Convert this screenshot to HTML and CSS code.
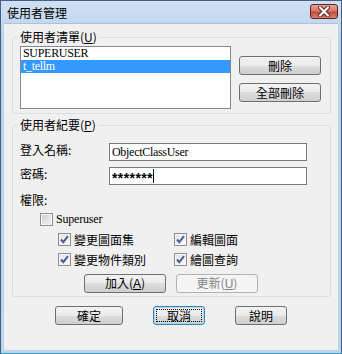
FILE: index.html
```html
<!DOCTYPE html>
<html lang="zh-Hant">
<head>
    <meta charset="UTF-8">
    <title>使用者管理</title>
    <link rel="stylesheet" href="styles.css">
</head>
<body>

<div class="window">
    <div class="titlebar">
        <span class="title">使用者管理</span>
        <span class="close-btn">
            <svg width="16" height="11" viewBox="0 0 16 11">
                <path d="M4 1.5 L12 9.5 M12 1.5 L4 9.5" stroke="#5a1f1f" stroke-width="4" stroke-linecap="round"/>
                <path d="M4 1.5 L12 9.5 M12 1.5 L4 9.5" stroke="#ffffff" stroke-width="2.2" stroke-linecap="round"/>
            </svg>
        </span>
    </div>

    <div class="client">
        <!-- user list -->
        <fieldset class="group">
            <legend>使用者清單(<u>U</u>)</legend>
            <div class="list-row">
                <div class="listbox">
                    <div class="list-item">SUPERUSER</div>
                    <div class="list-item selected">t_tellm</div>
                </div>
                <div class="side-buttons">
                    <button class="btn wide">刪除</button>
                    <button class="btn wide">全部刪除</button>
                </div>
            </div>
        </fieldset>

        <!-- user details -->
        <fieldset class="group group-detail">
            <legend>使用者紀要(<u>P</u>)</legend>

            <div class="field-row">
                <label class="field-label">登入名稱:</label>
                <div class="textbox">ObjectClassUser</div>
            </div>
            <div class="field-row second">
                <label class="field-label">密碼:</label>
                <div class="textbox password">*******<span class="caret"></span></div>
            </div>

            <div class="perm-label">權限:</div>

            <div class="check superuser">
                <span class="cb"></span>
                <span class="latin">Superuser</span>
            </div>

            <div class="check-grid">
                <div class="check">
                    <span class="cb checked"><svg width="11" height="11" viewBox="0 0 11 11"><path d="M2 5.5 L4.3 8.2 L9 2.2" fill="none" stroke="#4a5f97" stroke-width="2"/></svg></span>
                    <span>變更圖面集</span>
                </div>
                <div class="check">
                    <span class="cb checked"><svg width="11" height="11" viewBox="0 0 11 11"><path d="M2 5.5 L4.3 8.2 L9 2.2" fill="none" stroke="#4a5f97" stroke-width="2"/></svg></span>
                    <span>編輯圖面</span>
                </div>
                <div class="check">
                    <span class="cb checked"><svg width="11" height="11" viewBox="0 0 11 11"><path d="M2 5.5 L4.3 8.2 L9 2.2" fill="none" stroke="#4a5f97" stroke-width="2"/></svg></span>
                    <span>變更物件類別</span>
                </div>
                <div class="check">
                    <span class="cb checked"><svg width="11" height="11" viewBox="0 0 11 11"><path d="M2 5.5 L4.3 8.2 L9 2.2" fill="none" stroke="#4a5f97" stroke-width="2"/></svg></span>
                    <span>繪圖查詢</span>
                </div>
            </div>

            <div class="add-row">
                <button class="btn wide">加入(<u>A</u>)</button>
                <button class="btn wide" disabled>更新(<u>U</u>)</button>
            </div>
        </fieldset>

        <div class="dialog-buttons">
            <button class="btn ok">確定</button>
            <button class="btn small focused">取消</button>
            <button class="btn small">說明</button>
        </div>
    </div>
</div>

</body>
</html>
```

FILE: styles.css
```css
body {
    margin: 0;
    font-family: "Liberation Serif", "Noto Sans CJK TC", serif;
    font-size: 12px;
    color: #000;
    background-color: #fff;
}
.window {
    width: 342px;
    height: 354px;
    box-sizing: border-box;
    border: 1px solid #43607f;
    border-bottom-color: #2aa0cf;
    padding: 0 3px 3px 3px;
    background: linear-gradient(#cfe0f3, #b9d1ea 40px, #bcd4ec);
    display: flex;
    flex-direction: column;
}
.titlebar {
    height: 22px;
    display: flex;
    align-items: flex-start;
    justify-content: space-between;
    padding-left: 3px;
}
.title {
    font-family: "Noto Sans CJK TC", sans-serif;
    font-size: 12px;
    line-height: 14px;
    margin-top: 5px;
}
.close-btn {
    width: 28px;
    height: 15px;
    box-sizing: border-box;
    margin-top: 3px;
    border: 1px solid #5b2424;
    border-radius: 3px;
    background: linear-gradient(#e8a495, #d77766 45%, #c64a38 55%, #d8826f);
    display: flex;
    align-items: center;
    justify-content: center;
}
.client {
    flex: 1;
    background-color: #f0f0f0;
    padding-top: 6px;
    border-top: 1px solid #a9c3de;
}
.group {
    margin: 0 7px 0 8px;
    border: 1px solid #d5dfe5;
    border-radius: 3px;
    padding: 2px 9px 4px 7px;
    min-width: 0;
}
.group legend {
    font-family: "Noto Sans CJK TC", sans-serif;
    line-height: 14px;
    padding: 0 2px;
    margin-left: -2px;
}
.group-detail {
    margin-top: 4px;
    padding-top: 11px;
    padding-bottom: 3px;
}
.list-row {
    display: flex;
    gap: 8px;
}
.listbox {
    width: 211px;
    height: 63px;
    box-sizing: border-box;
    border: 1px solid #828790;
    background-color: #fff;
}
.list-item {
    height: 13px;
    line-height: 13px;
    padding-left: 2px;
    letter-spacing: -0.3px;
}
.list-item.selected {
    background-color: #3399ff;
    color: #fff;
}
.side-buttons {
    display: flex;
    flex-direction: column;
    gap: 8px;
    padding-top: 10px;
}
.btn {
    height: 19px;
    box-sizing: border-box;
    padding: 0;
    border: 1px solid #707070;
    border-radius: 3px;
    background: linear-gradient(#f2f2f2, #ebebeb 50%, #dddddd 50%, #cfcfcf);
    font-family: "Noto Sans CJK TC", sans-serif;
    font-size: 12px;
    line-height: 16px;
    color: #000;
}
.btn u {
    font-family: "Liberation Sans", sans-serif;
}
.btn:disabled {
    border-color: #adb2b5;
    background: #f4f4f4;
    color: #838383;
}
.btn.wide {
    width: 82px;
}
.btn.ok {
    width: 68px;
}
.btn.small {
    width: 52px;
}
.btn.focused {
    border-color: #3c7fb1;
    box-shadow: inset 0 0 0 1px #a8dcf6;
    outline: 1px dotted #000;
    outline-offset: -4px;
}
.field-row {
    display: flex;
    align-items: flex-start;
}
.field-row.second {
    margin-top: 6px;
}
.field-label {
    width: 89px;
    font-family: "Noto Sans CJK TC", sans-serif;
    line-height: 13px;
}
.textbox {
    width: 198px;
    height: 18px;
    box-sizing: border-box;
    border: 1px solid #7a7a7a;
    background-color: #fff;
    padding-left: 2px;
    line-height: 16px;
    letter-spacing: -0.3px;
    display: flex;
    align-items: center;
}
.textbox.password {
    font-family: "Liberation Sans", sans-serif;
    font-weight: bold;
    font-size: 14px;
    letter-spacing: 0.4px;
    padding-top: 4px;
}
.caret {
    width: 1px;
    height: 14px;
    margin-top: -4px;
    background-color: #000;
}
.perm-label {
    font-family: "Noto Sans CJK TC", sans-serif;
    line-height: 13px;
    margin-top: 8px;
}
.check {
    display: flex;
    align-items: center;
    gap: 3px;
    height: 13px;
    font-family: "Noto Sans CJK TC", sans-serif;
    line-height: 13px;
}
.check .latin {
    font-family: "Liberation Serif", serif;
    letter-spacing: -0.2px;
}
.superuser {
    margin-top: 7px;
    padding-left: 20px;
}
.cb {
    width: 13px;
    height: 13px;
    box-sizing: border-box;
    border: 1px solid #8f8f8f;
    background: linear-gradient(135deg, #c8ccd2, #f7f7f7);
    box-shadow: inset 0 0 0 1px #f4f4f4;
    display: flex;
    align-items: center;
    justify-content: center;
}
.cb.checked {
    background: linear-gradient(135deg, #dfe3e8, #fbfbfb);
}
.check-grid {
    display: grid;
    grid-template-columns: 116px auto;
    row-gap: 7px;
    margin-top: 7px;
    padding-left: 38px;
}
.add-row {
    display: flex;
    gap: 10px;
    margin-top: 8px;
    padding-left: 64px;
}
.dialog-buttons {
    display: flex;
    gap: 30px;
    margin-top: 9px;
    padding-left: 51px;
}
```
